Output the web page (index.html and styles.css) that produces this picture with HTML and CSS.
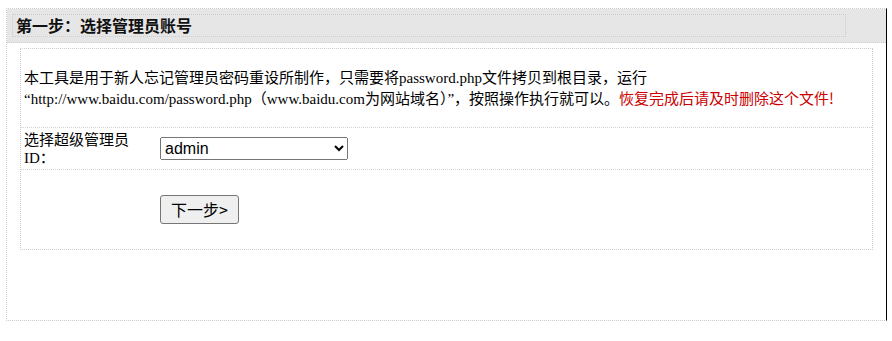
FILE: index.html
```html
<!DOCTYPE html>
<html lang="zh-CN">
<head>
<meta charset="utf-8">
<title>第一步：选择管理员账号</title>
<link rel="stylesheet" href="styles.css">
</head>
<body>
<div class="panel">
  <div class="panel-head">
    <div class="panel-title">第一步：选择管理员账号</div>
  </div>
  <div class="content">
    <div class="row intro">本工具是用于新人忘记管理员密码重设所制作，只需要将password.php文件拷贝到根目录，运行<br>“http://www.baidu.com/password.php（www.baidu.com为网站域名）”，按照操作执行就可以。<span class="warn">恢复完成后请及时删除这个文件!</span></div>
    <div class="row field">
      <div class="label">选择超级管理员ID：</div>
      <div class="control">
        <select class="admin-select">
          <option>admin</option>
        </select>
      </div>
    </div>
    <div class="row actions">
      <div class="label"></div>
      <div class="control">
        <button class="next-btn" type="button">下一步&gt;</button>
      </div>
    </div>
  </div>
</div>
</body>
</html>
```

FILE: styles.css
```css
html, body {
  background: #fff;
}

body {
  margin: 8px 5px 0 6px;
  font-family: "Liberation Serif", "Noto Sans CJK SC", serif;
  font-size: 15px;
  line-height: 19px;
  color: #000;
}

.panel {
  border-top: 1px dotted #ccc;
  border-left: 1px dotted #ccc;
  border-bottom: 1px dotted #ccc;
  border-right: 1px solid #000;
  padding-bottom: 70px;
}

.panel-head {
  background: #e6e6e6;
  border-bottom: 1px dotted #ccc;
  padding: 5px 40px 5px 5px;
}

.panel-title {
  border: 1px dotted #ccc;
  padding-left: 3px;
  font-family: "Noto Sans CJK SC", sans-serif;
  font-weight: bold;
  font-size: 16px;
  line-height: 21px;
  height: 21px;
  color: #111;
}

.content {
  margin: 5px 13px 0 13px;
  border: 1px dotted #ccc;
}

.row {
  border-bottom: 1px dotted #d4d4d4;
}

.row:last-child {
  border-bottom: none;
}

.intro {
  padding: 20px 3px 18px 3px;
}

.warn {
  color: #cc0000;
  font-family: "Noto Sans CJK SC", sans-serif;
}

.field,
.actions {
  display: grid;
  grid-template-columns: 139px 1fr;
  align-items: center;
}

.field {
  min-height: 41px;
}

.field .label {
  padding-left: 3px;
  width: 110px;
  line-height: 18px;
}

.actions {
  padding: 25px 0;
}

.admin-select {
  display: block;
  width: 188px;
  height: 23px;
  box-sizing: border-box;
  font-family: "Liberation Sans", Arial, sans-serif;
  font-size: 16px;
  margin: 0;
}

.next-btn {
  display: block;
  box-sizing: border-box;
  height: 29px;
  width: 79px;
  font-family: "Noto Sans CJK SC", "Liberation Sans", sans-serif;
  font-size: 16px;
  line-height: 19px;
  padding: 3px 8px;
  background: #efefef;
  border: 1px solid #767676;
  border-radius: 3px;
  color: #000;
}
```
